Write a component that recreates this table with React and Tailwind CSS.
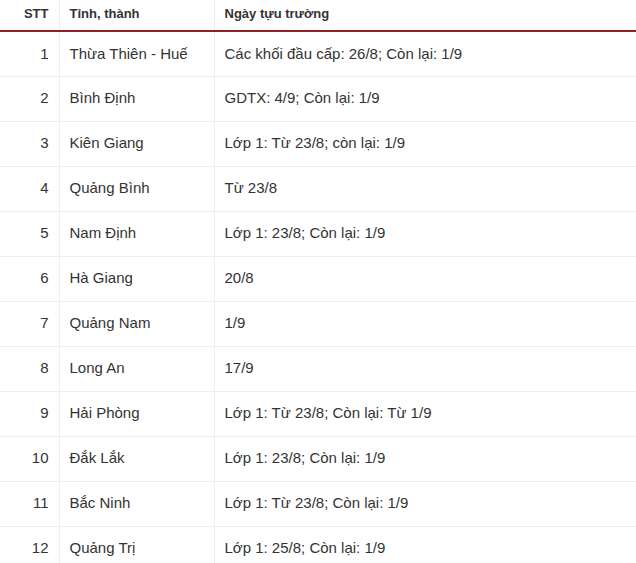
const rows = [
  ['1', 'Thừa Thiên - Huế', 'Các khối đầu cấp: 26/8; Còn lại: 1/9'],
  ['2', 'Bình Định', 'GDTX: 4/9; Còn lại: 1/9'],
  ['3', 'Kiên Giang', 'Lớp 1: Từ 23/8; còn lại: 1/9'],
  ['4', 'Quảng Bình', 'Từ 23/8'],
  ['5', 'Nam Định', 'Lớp 1: 23/8; Còn lại: 1/9'],
  ['6', 'Hà Giang', '20/8'],
  ['7', 'Quảng Nam', '1/9'],
  ['8', 'Long An', '17/9'],
  ['9', 'Hải Phòng', 'Lớp 1: Từ 23/8; Còn lại: Từ 1/9'],
  ['10', 'Đắk Lắk', 'Lớp 1: 23/8; Còn lại: 1/9'],
  ['11', 'Bắc Ninh', 'Lớp 1: Từ 23/8; Còn lại: 1/9'],
  ['12', 'Quảng Trị', 'Lớp 1: 25/8; Còn lại: 1/9'],
]

export default function App() {
  return (
    <div className="w-[636px] h-[563px] overflow-hidden bg-white font-['Liberation_Sans',Arial,sans-serif] text-[#333]">
      <table className="w-full border-collapse table-fixed">
        <colgroup>
          <col className="w-[59px]" />
          <col className="w-[155px]" />
          <col />
        </colgroup>
        <thead>
          <tr className="h-[31px] border-b-2 border-[#8b2323] text-[13px] font-bold">
            <th className="pr-[10px] pb-[3px] text-right align-middle border-r border-[#eee]">STT</th>
            <th className="pl-[10px] pb-[3px] text-left align-middle border-r border-[#eee]">Tỉnh, thành</th>
            <th className="pl-[10px] pb-[3px] text-left align-middle">Ngày tựu trường</th>
          </tr>
        </thead>
        <tbody className="text-[15px]">
          {rows.map((r) => (
            <tr key={r[0]} className="h-[45px] border-b border-[#eee]">
              <td className="pr-[10px] text-right border-r border-[#eee]">{r[0]}</td>
              <td className="pl-[10px] border-r border-[#eee]">{r[1]}</td>
              <td className="pl-[10px]">{r[2]}</td>
            </tr>
          ))}
        </tbody>
      </table>
    </div>
  )
}
